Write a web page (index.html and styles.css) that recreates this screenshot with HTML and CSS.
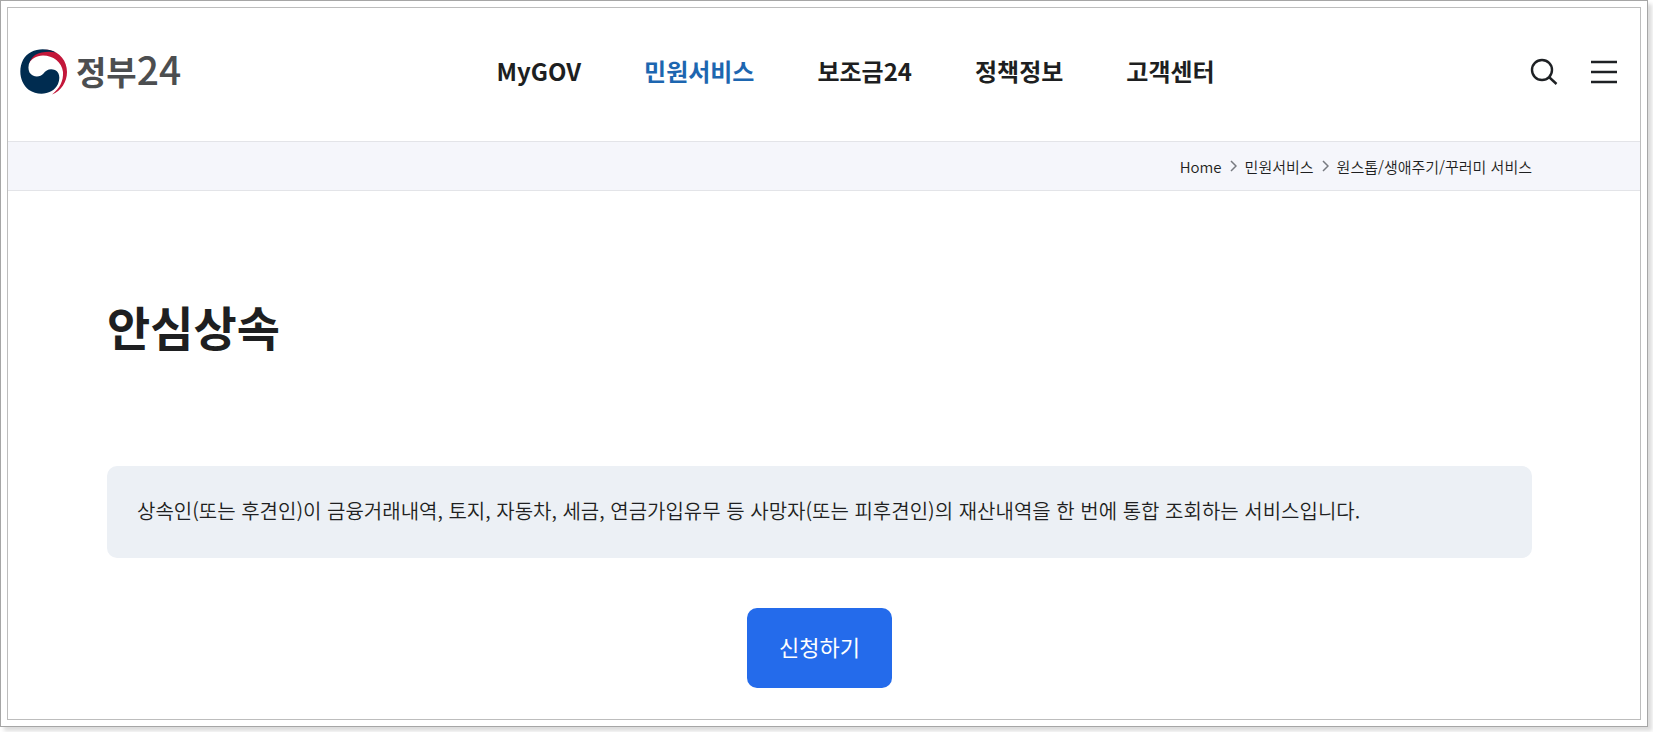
FILE: index.html
```
<!DOCTYPE html>
<html lang="ko">
<head>
  <meta charset="UTF-8" />
  <meta name="viewport" content="width=device-width, initial-scale=1.0"/>
  <title>안심상속 | 정부24</title>
  <link rel="stylesheet" href="styles.css">
</head>
<body>

  <div class="frame">
    <div class="page">

      <header class="header">
        <a href="#" class="logo">
          <svg class="logo-mark" viewBox="0 0 47 46" aria-hidden="true">
            <path fill="#c3173a" d="M8.500 15C11 5 20 0 29 1C40 3 47 12 47 23C47 33 41 42 32 45.500C40 39 43.500 32 43 23C42 13 33 6.500 23 6.500C16 7 11 10 8.500 15Z"/>
            <path fill="#002c50" d="M36 3.500C24-2.500 9 0 3 11C-2 21 0 34 9 41C18 47 33 46 38 35C40.500 29 39.500 23 35 21C30 19 26 21 23.500 24.500C20 28.500 13 28.500 9.500 23.500C7 18 9 11 15 6C21 3 28 2 36 3.500Z"/>
          </svg>
          <span class="logo-text">정부<span class="logo-num">24</span></span>
        </a>

        <nav class="gnb">
          <a href="#">MyGOV</a>
          <a href="#" class="active">민원서비스</a>
          <a href="#">보조금24</a>
          <a href="#">정책정보</a>
          <a href="#">고객센터</a>
        </nav>

        <div class="tools">
          <button type="button" aria-label="검색">
            <svg viewBox="0 0 28 28">
              <circle cx="12" cy="12" r="10"/>
              <path d="M19 19L26.500 26"/>
            </svg>
          </button>
          <button type="button" aria-label="전체메뉴">
            <svg viewBox="0 0 28 28">
              <path d="M1 4H27M1 14H27M1 24H27"/>
            </svg>
          </button>
        </div>
      </header>

      <div class="breadcrumb">
        <a href="#">Home</a>
        <svg viewBox="0 0 7 12"><path d="M1 1L6 6L1 11"/></svg>
        <a href="#">민원서비스</a>
        <svg viewBox="0 0 7 12"><path d="M1 1L6 6L1 11"/></svg>
        <a href="#">원스톱/생애주기/꾸러미 서비스</a>
      </div>

      <main class="content">
        <h1>안심상속</h1>
        <p class="info-box">상속인(또는 후견인)이 금융거래내역, 토지, 자동차, 세금, 연금가입유무 등 사망자(또는 피후견인)의 재산내역을 한 번에 통합 조회하는 서비스입니다.</p>
        <button type="button" class="apply-btn">신청하기</button>
      </main>

    </div>
  </div>

</body>
</html>
```
FILE: styles.css
```
* {
  box-sizing: border-box;
}

body {
  margin: 0;
  padding: 0 5px 5px 0;
  background: #fff;
  color: #1e1f21;
  font-family: "Noto Sans CJK KR", sans-serif;
}

a {
  color: inherit;
  text-decoration: none;
}

button {
  border: none;
  cursor: pointer;
  font-family: inherit;
}

.frame {
  padding: 6px;
  border: 1px solid #a6a6a6;
  background: #fff;
  box-shadow: 4px 4px 4px rgba(0, 0, 0, 0.14);
}

.page {
  border: 1px solid #bdbdbd;
}

.header {
  display: flex;
  align-items: center;
  justify-content: space-between;
  height: 134px;
  padding: 0 22px 5px 12px;
  border-bottom: 1px solid #e3e4e8;
}

.logo {
  display: flex;
  align-items: center;
  gap: 9px;
}

.logo-mark {
  width: 47px;
  height: 46px;
}

.logo-text {
  padding-bottom: 6px;
  color: #4c4e50;
  font-size: 33px;
  font-weight: 700;
  line-height: 40px;
}

.logo-num {
  font-size: 39px;
  font-weight: 500;
}

.gnb {
  display: flex;
  gap: 63px;
  padding-bottom: 2px;
  font-size: 24px;
  font-weight: 700;
  line-height: 36px;
}

.gnb .active {
  color: #1d66b0;
}

.tools {
  display: flex;
  gap: 32px;
}

.tools button {
  padding: 0;
  background: none;
}

.tools svg {
  display: block;
  width: 28px;
  height: 28px;
  fill: none;
  stroke: #1e2124;
  stroke-width: 2.4;
}

.breadcrumb {
  display: flex;
  align-items: center;
  justify-content: flex-end;
  gap: 8px;
  height: 49px;
  padding-right: 108px;
  border-bottom: 1px solid #e3e4e8;
  background: #f5f6fb;
  font-size: 15px;
  font-weight: 350;
}

.breadcrumb svg {
  width: 7px;
  height: 12px;
  fill: none;
  stroke: #777a80;
  stroke-width: 1.5;
}

.content {
  display: flex;
  flex-direction: column;
  align-items: center;
  padding: 99px 108px 31px 99px;
}

.content h1 {
  align-self: stretch;
  margin: 0 0 104px;
  font-size: 47px;
  font-weight: 700;
  line-height: 72px;
}

.info-box {
  align-self: stretch;
  margin: 0 0 50px;
  padding: 29px 30px 31px;
  border-radius: 10px;
  background: #ecf0f5;
  font-size: 20px;
  font-weight: 350;
  line-height: 32px;
}

.apply-btn {
  height: 80px;
  padding: 0 32px 5px;
  border-radius: 10px;
  background: #246beb;
  color: #fff;
  font-size: 22px;
}
```
